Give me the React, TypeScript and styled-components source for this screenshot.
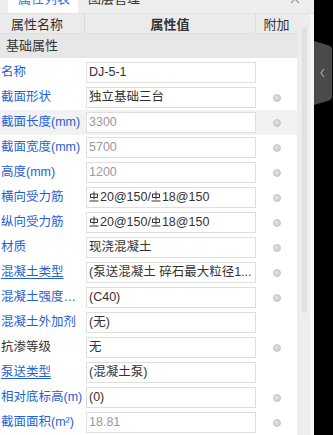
import styled, {createGlobalStyle} from 'styled-components';

const GlobalStyle = createGlobalStyle`
  html, body {
    margin: 0;
    padding: 0;
    background: #000;
  }

  body {
    font-family: "Liberation Sans", "Noto Sans CJK SC", sans-serif;
    font-size: 12px;
    color: #333;
  }
`;

const Screen = styled.div`
  display: flex;
  width: 333px;
  height: 435px;
  overflow: hidden;
  background: #000;
`;

const Panel = styled.div`
  display: flex;
  flex-direction: column;
  width: 314px;
  background: #f3f3f3;
`;

const TabBar = styled.div`
  display: flex;
  align-items: flex-start;
  height: 13px;
  padding-left: 8px;
  background: #eeeeee;
  border-bottom: 1px solid #e2e2e2;
  overflow: hidden;
`;

const Tab = styled.div<{ $active?: boolean }>`
  height: 13px;
  padding: 0 8px 0 10px;
  background: ${p => p.$active ? '#fff' : 'transparent'};
  color: ${p => p.$active ? '#2f6fe0' : '#333'};
  font-size: 13px;
  line-height: 14px;
  white-space: nowrap;

  span {
    display: block;
    margin-top: -8px;
  }
`;

const Collapse = styled.div`
  margin-left: auto;
  margin-right: 14px;
  margin-top: -3px;

  svg {
    display: block;
  }
`;

const Body = styled.div`
  display: flex;
  flex: 1;
  min-height: 0;
`;

const Table = styled.div`
  width: 297px;
  background: #fff;
  display: flex;
  flex-direction: column;
`;

const columns = '85px 171px 41px';

const HeaderRow = styled.div`
  display: grid;
  grid-template-columns: ${columns};
  height: 24px;
  background: #ebebeb;
  border-bottom: 1px solid #e0e0e0;
  box-sizing: border-box;
  font-size: 13px;
`;

const HeaderCell = styled.div<{ $align?: string; $bold?: boolean }>`
  display: flex;
  align-items: center;
  justify-content: ${p => p.$align || 'flex-start'};
  padding-left: ${p => p.$align ? 0 : 11}px;
  font-weight: ${p => p.$bold ? 600 : 400};
  color: #333;

  &:not(:last-child) {
    border-right: 1px solid #dadada;
  }
`;

const GroupRow = styled.div`
  height: 24px;
  line-height: 24px;
  padding-left: 6px;
  background: #e7e7e7;
  color: #333;
  font-size: 13px;
`;

const Rows = styled.div`
  padding-top: 2px;
`;

const Row = styled.div<{ $hover?: boolean }>`
  display: grid;
  grid-template-columns: ${columns};
  height: 25px;
  background: ${p => p.$hover ? '#f2f2f2' : '#fff'};
`;

const Label = styled.div<{ $plain?: boolean; $link?: boolean }>`
  padding: 0 1px 0 1px;
  line-height: 25px;
  font-size: 12.5px;
  color: ${p => p.$plain ? '#333' : '#1f5fd8'};
  text-decoration: ${p => p.$link ? 'underline' : 'none'};
  text-underline-offset: 2px;
  white-space: nowrap;
  overflow: hidden;
  text-overflow: ellipsis;
`;

const ValueCell = styled.div`
  padding: 2px 0 2px 1px;
`;

const ValueBox = styled.div<{ $muted?: boolean }>`
  box-sizing: border-box;
  width: 170px;
  height: 21px;
  border: 1px solid #dfdfdf;
  background: #fff;
  padding: 0 6px 0 2px;
  line-height: 19px;
  font-size: 12.5px;
  color: ${p => p.$muted ? '#9a9a9a' : '#333'};
  white-space: nowrap;
  overflow: hidden;
`;

const ExtraCell = styled.div`
  display: flex;
  align-items: center;
  justify-content: center;
`;

const Dot = styled.span`
  width: 8px;
  height: 8px;
  border-radius: 50%;
  background: radial-gradient(circle at 40% 35%, #e4e4e4, #c6c6c6);
  border: 1px solid #c4c4c4;
  box-sizing: border-box;
`;

const ScrollTrack = styled.div`
  flex: 1;
  display: flex;
  padding-top: 13px;
  background: linear-gradient(to right, #ededed 0, #ededed 13px, #f7f7f7 13px);
`;

const ScrollThumb = styled.div`
  width: 5px;
  height: 286px;
  margin-left: 5px;
  border-radius: 3px;
  background: #e0e0e0;
`;

const Side = styled.div`
  flex: 1;
  padding-top: 41px;

  svg {
    display: block;
  }
`;

const RebarMark = styled.svg`
  display: inline-block;
  vertical-align: -1px;
  margin-right: 1px;
`;

const Rebar = () => (
  <RebarMark width="10" height="11" viewBox="0 0 10 11">
    <path d="M5 0.5V8.5M1.5 3H8.5V6.5H1.5ZM0.5 10H9.5" stroke="#333" strokeWidth="1" fill="none"/>
  </RebarMark>
);

interface Property {
  label: string
  value: React.ReactNode
  muted?: boolean
  plain?: boolean
  link?: boolean
  dot?: boolean
  hover?: boolean
}

const rebar = <><Rebar/>20@150/<Rebar/>18@150</>;

const properties: Property[] = [
  {label: '名称', value: 'DJ-5-1'},
  {label: '截面形状', value: '独立基础三台', dot: true},
  {label: '截面长度(mm)', value: '3300', muted: true, dot: true, hover: true},
  {label: '截面宽度(mm)', value: '5700', muted: true, dot: true},
  {label: '高度(mm)', value: '1200', muted: true, dot: true},
  {label: '横向受力筋', value: rebar, dot: true},
  {label: '纵向受力筋', value: rebar, dot: true},
  {label: '材质', value: '现浇混凝土', dot: true},
  {label: '混凝土类型', value: '(泵送混凝土 碎石最大粒径1...', link: true, dot: true},
  {label: '混凝土强度等级', value: '(C40)', dot: true},
  {label: '混凝土外加剂', value: '(无)'},
  {label: '抗渗等级', value: '无', plain: true, dot: true},
  {label: '泵送类型', value: '(混凝土泵)', link: true},
  {label: '相对底标高(m)', value: '(0)', dot: true},
  {label: '截面面积(m²)', value: '18.81', muted: true, dot: true},
];

const App = () => {
  return (
    <Screen>
      <GlobalStyle/>
      <Panel>
        <TabBar>
          <Tab $active><span>属性列表</span></Tab>
          <Tab><span>图层管理</span></Tab>
          <Collapse>
            <svg width="10" height="7" viewBox="0 0 10 7">
              <path d="M1 6L5 2L9 6" stroke="#9a9a9a" strokeWidth="1.2" fill="none"/>
            </svg>
          </Collapse>
        </TabBar>
        <Body>
          <Table>
            <HeaderRow>
              <HeaderCell>属性名称</HeaderCell>
              <HeaderCell $align="center" $bold>属性值</HeaderCell>
              <HeaderCell $align="center">附加</HeaderCell>
            </HeaderRow>
            <GroupRow>基础属性</GroupRow>
            <Rows>
              {properties.map(item => (
                <Row key={item.label} $hover={item.hover}>
                  <Label $plain={item.plain} $link={item.link}>{item.label}</Label>
                  <ValueCell>
                    <ValueBox $muted={item.muted}>{item.value}</ValueBox>
                  </ValueCell>
                  <ExtraCell>{item.dot && <Dot/>}</ExtraCell>
                </Row>
              ))}
            </Rows>
          </Table>
          <ScrollTrack>
            <ScrollThumb/>
          </ScrollTrack>
        </Body>
      </Panel>
      <Side>
        <svg width="19" height="64" viewBox="0 0 19 64">
          <path d="M0 0L15 4.5Q18 5.5 18 8.5V55.5Q18 58.5 15 59.5L0 64Z" fill="#4a4a4a"/>
          <path d="M10 28L7 32L10 36" stroke="#a8a8a8" strokeWidth="1.1" fill="none"/>
        </svg>
      </Side>
    </Screen>
  );
};

export default App;
